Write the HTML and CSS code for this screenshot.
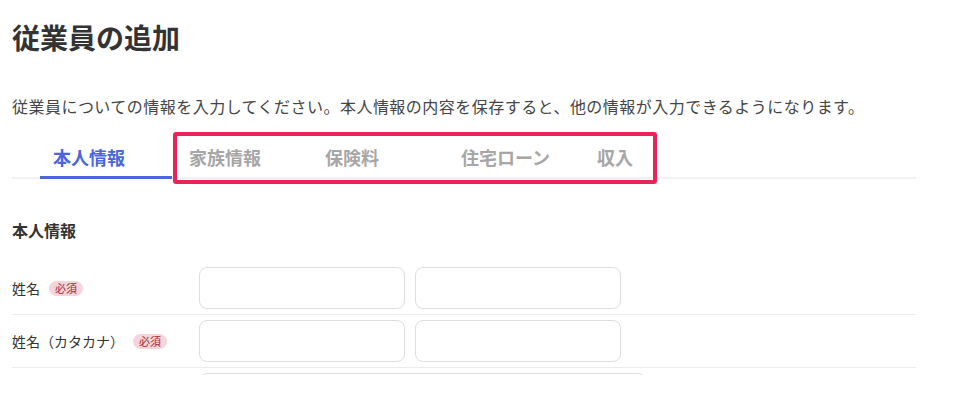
FILE: index.html
```html
<!DOCTYPE html>
<html lang="ja">
<head>
  <meta charset="UTF-8">
  <title>従業員の追加</title>
  <link rel="stylesheet" href="styles.css">
</head>
<body>
  <div class="page">
    <h1 class="title">従業員の追加</h1>
    <p class="desc">従業員についての情報を入力してください。本人情報の内容を保存すると、他の情報が入力できるようになります。</p>

    <div class="tabs">
      <div class="tab active">本人情報</div>
      <div class="tab">家族情報</div>
      <div class="tab">保険料</div>
      <div class="tab">住宅ローン</div>
      <div class="tab">収入</div>
      <!-- 注目枠 -->
      <div class="highlight"></div>
    </div>

    <h2 class="section">本人情報</h2>

    <div class="form">
      <div class="row">
        <div class="label">姓名<span class="req">必須</span></div>
        <input class="field" type="text">
        <input class="field" type="text">
      </div>
      <div class="row">
        <div class="label">姓名（カタカナ）<span class="req">必須</span></div>
        <input class="field" type="text">
        <input class="field" type="text">
      </div>
      <div class="row">
        <div class="label"></div>
        <input class="field wide" type="text">
      </div>
    </div>
  </div>
</body>
</html>
```

FILE: styles.css
```css
body {
  margin: 0;
  font-family: "Noto Sans CJK JP", "Noto Sans", sans-serif;
  color: #333;
  background: #fff;
}

.page {
  width: 904px;
  padding-left: 12px;
}

.title {
  margin: 17px 0 0;
  font-size: 28px;
  line-height: 40px;
  font-weight: 700;
  color: #333;
}

.desc {
  margin: 37px 0 0;
  font-size: 16px;
  line-height: 24px;
  color: #444;
  letter-spacing: 0.47px;
}

/* タブ */
.tabs {
  position: relative;
  display: flex;
  margin-top: 20px;
  padding-left: 28px;
  border-bottom: 2px solid #f2f2f2;
}

.tab {
  width: 119px;
  margin-right: 4px;
  padding-left: 13px;
  font-size: 18px;
  font-weight: 700;
  line-height: 38px;
  color: #a6a6a6;
  border-bottom: 3px solid transparent;
  margin-bottom: -2px;
}

.tab.active {
  color: #4a66d9;
  border-bottom-color: #4a66d9;
}

.highlight {
  position: absolute;
  left: 161px;
  top: -6px;
  width: 476px;
  height: 44px;
  border: 4px solid #ea2459;
  border-radius: 3px;
}

.section {
  margin: 39px 0 0;
  font-size: 16px;
  line-height: 24px;
  font-weight: 700;
  color: #333;
}

/* フォーム */
.form {
  margin-top: 20px;
  height: 113px;
  overflow: hidden;
}

.row {
  display: flex;
  align-items: center;
  gap: 10px;
  padding: 5px 0;
  border-bottom: 1px solid #ececec;
}

.label {
  display: flex;
  align-items: center;
  width: 177px;
  font-size: 14px;
  color: #333;
}

.req {
  margin-left: 9px;
  padding: 0 6px;
  font-size: 11px;
  line-height: 15px;
  color: #9b2a3a;
  background: #f6d4da;
  border-radius: 8px;
}

.field {
  box-sizing: border-box;
  width: 206px;
  height: 42px;
  border: 1px solid #dedede;
  border-radius: 8px;
  background: #fff;
}

.field.wide {
  width: 447px;
}
```
